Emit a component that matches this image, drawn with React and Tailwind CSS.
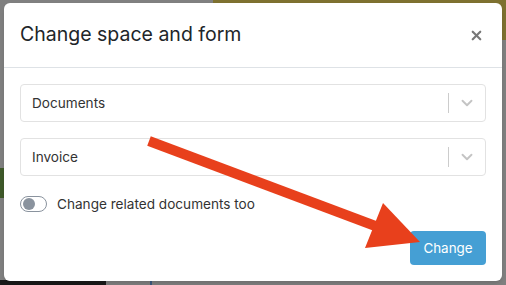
import React from 'react';
import { ChevronDown, X } from 'lucide-react';

const Select = ({ value }) => (
  <div className="flex h-[38px] items-center rounded border border-[#e2e2e2] bg-white pl-[11px]">
    <span className="flex-1 text-[13.6px] text-[#333]">{value}</span>
    <span className="h-[20px] w-px bg-[#cccccc]" />
    <span className="flex w-[36px] justify-center">
      <ChevronDown className="h-[18px] w-[18px] text-[#c4c4c4]" strokeWidth={2.5} />
    </span>
  </div>
);

const App = () => {
  return (
    <div className="relative h-[285px] w-[506px] overflow-hidden bg-[#808080]" style={{ fontFamily: 'Inter, "Liberation Sans", sans-serif' }}>
      {/* page behind the overlay */}
      <div className="absolute left-[213px] top-0 h-[40px] w-[293px] bg-[#7e7130]" />
      <div className="absolute left-0 top-[168px] h-[30px] w-[4px] bg-[#3f5a2a]" />
      <div className="absolute bottom-0 left-0 h-[5px] w-[106px] bg-[#1a1a1a]" />
      <div className="absolute bottom-0 left-[150px] h-[5px] w-[2px] bg-[#3e5a80]" />

      {/* modal */}
      <div className="absolute left-[4px] top-[3px] w-[498px] rounded-md bg-white shadow-md">
        <div className="flex h-[65px] items-center justify-between border-b border-[#dee2e6] pl-[16px] pr-[18px]">
          <h2 className="text-[19.5px] text-[#212529]">Change space and form</h2>
          <X className="h-[15px] w-[15px] text-[#777]" strokeWidth={3.5} />
        </div>
        <div className="flex flex-col gap-[16px] px-[16px] pt-[16px]">
          <Select value="Documents" />
          <Select value="Invoice" />
          <div className="flex items-center gap-[10px] pt-[2px]">
            <span className="flex h-[16px] w-[27px] items-center rounded-full border border-[#8a939e] px-[2px]">
              <span className="h-[12px] w-[12px] rounded-full bg-[#8a939e]" />
            </span>
            <span className="text-[13.6px] text-[#333]">Change related documents too</span>
          </div>
        </div>
        <div className="flex justify-end px-[16px] pb-[16px] pt-[17px]">
          <button className="h-[34px] w-[76px] rounded bg-[#459fd4] text-[13.4px] text-white">Change</button>
        </div>
      </div>

      {/* annotation arrow */}
      <svg className="absolute left-0 top-0" width="506" height="285">
        <line x1="149" y1="141" x2="378" y2="227" stroke="#e8401c" strokeWidth="10" />
        <polygon points="383,203 365,248 420,242" fill="#e8401c" />
      </svg>
    </div>
  );
};

export default App;
